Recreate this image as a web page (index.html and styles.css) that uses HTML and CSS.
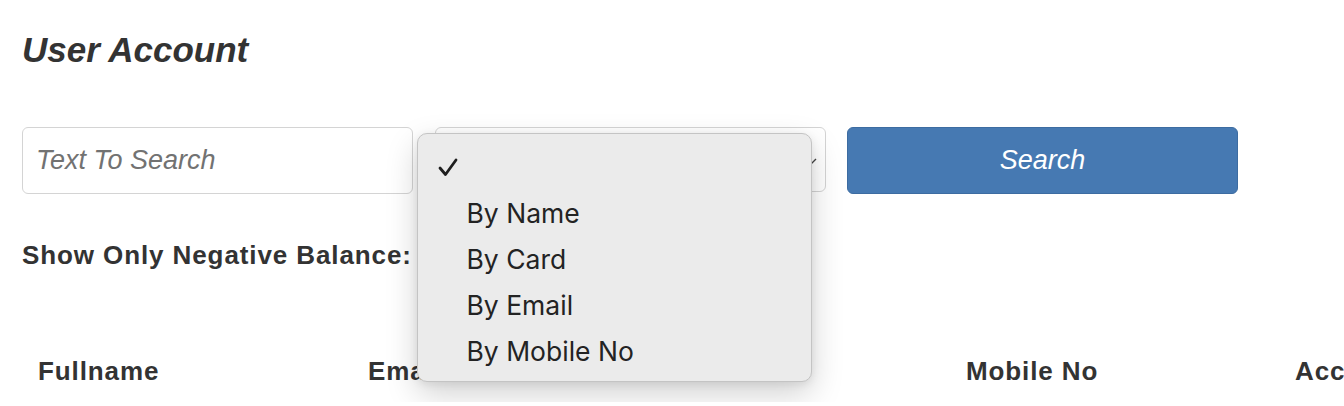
FILE: index.html
```html
<!DOCTYPE html>
<html lang="en">
<head>
    <meta charset="UTF-8">
    <meta name="viewport" content="width=device-width, initial-scale=1.0">
    <title>User Account</title>
    <link rel="stylesheet" href="styles.css">
</head>
<body>
<div class="container">
    <h1>User Account</h1>

    <div class="search-row">
        <input class="field" type="text" placeholder="Text To Search">
        <div class="select-wrap">
            <div class="select-box">
                <svg class="chevron" width="14" height="8" viewBox="0 0 14 8"><polyline points="1,1 7,7 13,1" fill="none" stroke="#444" stroke-width="1.4"/></svg>
            </div>
            <ul class="dropdown">
                <li class="checked">
                    <svg class="check" width="20" height="19" viewBox="0 0 20 19"><polyline points="2,10 7.5,16.5 18,2" fill="none" stroke="#1f1f1f" stroke-width="2.8" stroke-linecap="round" stroke-linejoin="round"/></svg>
                </li>
                <li>By Name</li>
                <li>By Card</li>
                <li>By Email</li>
                <li>By Mobile No</li>
            </ul>
        </div>
        <button class="btn-search" type="button">Search</button>
    </div>

    <div class="neg-label">Show Only Negative Balance:</div>

    <table class="accounts">
        <colgroup>
            <col class="c-name"><col class="c-email"><col class="c-card"><col class="c-mobile"><col class="c-balance">
        </colgroup>
        <tr><th>Fullname</th><th>Email</th><th>Card No</th><th>Mobile No</th><th>Account Balance</th></tr>
    </table>
</div>
</body>
</html>
```

FILE: styles.css
```css
html { overflow: hidden; }
body { font-family: "Liberation Sans", Arial, sans-serif; background: #fff; color: #333; margin: 0; padding: 0; }
.container { padding: 30px 0 0 22px; }
h1 { font-size: 35px; font-style: italic; font-weight: bold; line-height: 40px; margin: 0 0 57px; color: #333; }

.search-row { display: flex; gap: 21.5px; align-items: flex-start; }
.field { width: 391px; height: 67px; box-sizing: border-box; border: 1px solid #d4d4d4; border-radius: 6px; padding: 0 13px; font-family: inherit; font-size: 27px; font-style: italic; color: #333; background: #fff; }
.field::placeholder { color: #727272; }

.select-wrap { position: relative; width: 391px; height: 65px; }
.select-box { height: 65px; box-sizing: border-box; border: 1px solid #d4d4d4; border-radius: 6px; background: #fff; display: flex; align-items: center; justify-content: flex-end; padding-right: 8px; }
.chevron { margin-top: 4px; }

.dropdown { position: absolute; left: -18px; top: 6px; width: 395px; height: 249px; box-sizing: border-box; margin: 0; padding: 10px 0 0; list-style: none; background: #ebebeb; border: 1px solid #c4c4c4; border-radius: 10px; box-shadow: 0 12px 32px rgba(0, 0, 0, 0.18), 0 2px 8px rgba(0, 0, 0, 0.08); font-family: Inter, "Noto Sans", sans-serif; font-size: 26.5px; color: #232323; }
.dropdown li { height: 46px; line-height: 46px; padding-left: 49px; position: relative; }
.dropdown .check { position: absolute; left: 20px; top: 14px; }

.btn-search { width: 391px; height: 67px; box-sizing: border-box; background: #4679b2; border: 1px solid #3d6ca1; border-radius: 6px; color: #fff; font-family: inherit; font-size: 27px; font-style: italic; }

.neg-label { font-size: 26px; font-weight: bold; letter-spacing: 0.9px; line-height: 30px; margin-top: 46px; }

.accounts { table-layout: fixed; width: 1587px; border-collapse: collapse; margin-top: 70px; }
.accounts th { text-align: left; font-size: 26px; letter-spacing: 0.9px; line-height: 30px; padding: 16px; white-space: nowrap; overflow: hidden; }
.c-name { width: 330px; }
.c-email { width: 330px; }
.c-card { width: 268px; }
.c-mobile { width: 329px; }
.c-balance { width: 330px; }
```
